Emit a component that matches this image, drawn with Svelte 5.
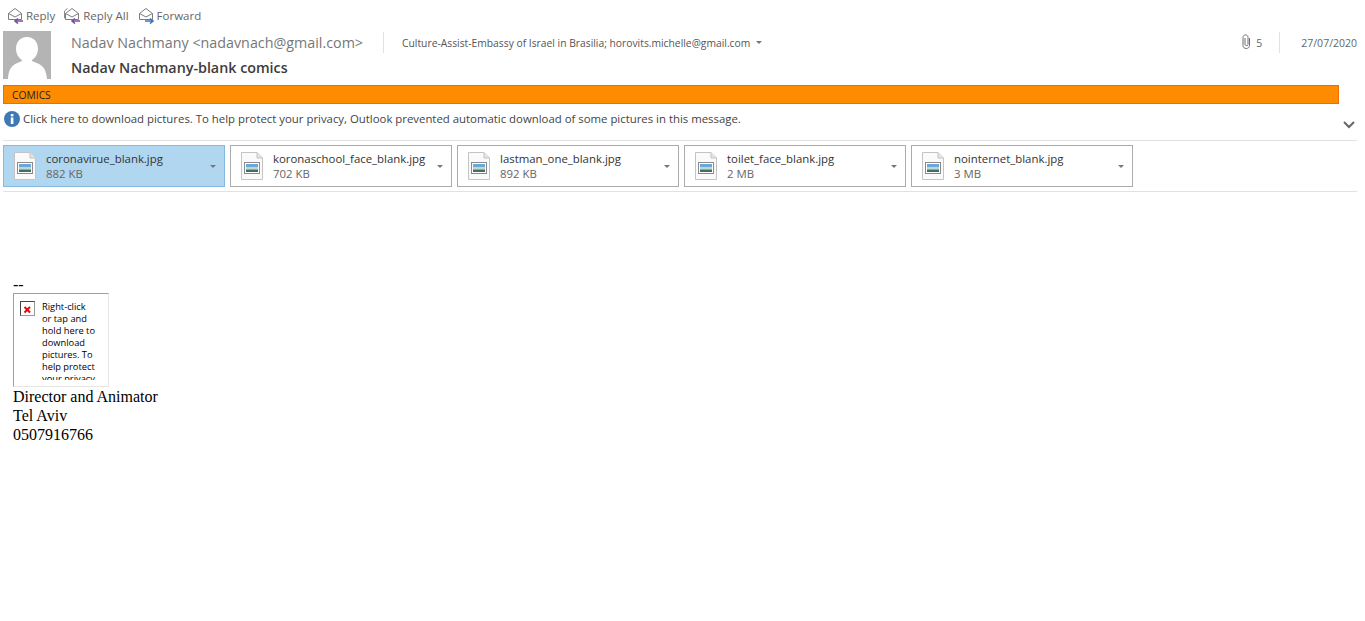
<script lang="ts">
	const attachments = [
		{ name: 'coronavirue_blank.jpg', size: '882 KB', selected: true },
		{ name: 'koronaschool_face_blank.jpg', size: '702 KB', selected: false },
		{ name: 'lastman_one_blank.jpg', size: '892 KB', selected: false },
		{ name: 'toilet_face_blank.jpg', size: '2 MB', selected: false },
		{ name: 'nointernet_blank.jpg', size: '3 MB', selected: false }
	];

	const actions = [
		{ label: 'Reply', arrow: '#7a4fa3', back: false, flip: true },
		{ label: 'Reply All', arrow: '#7a4fa3', back: true, flip: true },
		{ label: 'Forward', arrow: '#3f78b5', back: false, flip: false }
	];

	const blockedLines = [
		'Right-click',
		'or tap and',
		'hold here to',
		'download',
		'pictures. To',
		'help protect',
		'your privacy,'
	];
</script>

<div class="reading-pane">
	<div class="toolbar">
		{#each actions as action}
			<div class="action">
				<svg width="17" height="17" viewBox="0 0 17 17" fill="none">
					{#if action.back}
						<path d="M3.5 1.5 L0.5 4 V11 H2" stroke="#8a8a8a" />
					{/if}
					<path d="M1.5 6.5 L8 1.5 L14.5 6.5 V12.5 H1.5 Z" stroke="#7c7c7c" fill="#fff" />
					<path d="M1.5 6.5 L8 10 L14.5 6.5" stroke="#7c7c7c" />
					{#if action.flip}
						<path d="M16 14 H8 M11 11.5 L8 14 L11 16.5" stroke={action.arrow} stroke-width="1.6" />
					{:else}
						<path d="M7 14 H15 M12 11.5 L15 14 L12 16.5" stroke={action.arrow} stroke-width="1.6" />
					{/if}
				</svg>
				<span>{action.label}</span>
			</div>
		{/each}
	</div>

	<div class="header">
		<div class="avatar">
			<svg width="48" height="48" viewBox="0 0 48 48">
				<rect width="48" height="48" fill="#b4b4b4" />
				<path d="M24 6 C17 6 13 11 13 18 C13 23 16 27 19 29 V30 C13 33 6 33 5 48 H44 C43 33 35 33 29 30 V29 C32 27 35 23 35 18 C35 11 31 6 24 6 Z" fill="#fff" />
			</svg>
		</div>
		<div class="meta">
			<div class="meta-top">
				<span class="sender">Nadav Nachmany &lt;nadavnach@gmail.com&gt;</span>
				<span class="divider"></span>
				<span class="recipients">Culture-Assist-Embassy of Israel in Brasilia; horovits.michelle@gmail.com</span>
				<span class="caret small"></span>
				<span class="spacer"></span>
				<svg class="clip" width="9" height="16" viewBox="0 0 9 16" fill="none">
					<path d="M7.5 4 V11.5 C7.5 15.5 1 15.5 1 11.5 V3.5 C1 0 6 0 6 3.5 V10.5 C6 12 3 12 3 10.5 V4" stroke="#6f6f6f" />
				</svg>
				<span class="count">5</span>
				<span class="divider right"></span>
				<span class="date">27/07/2020</span>
			</div>
			<div class="subject">Nadav Nachmany-blank comics</div>
		</div>
	</div>

	<div class="category">COMICS</div>

	<div class="infobar">
		<svg width="16" height="16" viewBox="0 0 16 16">
			<circle cx="8" cy="8" r="8" fill="#3f78b5" />
			<rect x="6.8" y="6.5" width="2.6" height="6.5" fill="#fff" />
			<rect x="6.8" y="3" width="2.6" height="2.4" fill="#fff" />
		</svg>
		<span class="info-text">Click here to download pictures. To help protect your privacy, Outlook prevented automatic download of some pictures in this message.</span>
		<svg class="chevron" width="12" height="8" viewBox="0 0 12 8" fill="none">
			<path d="M1 1 L6 6 L11 1" stroke="#666" stroke-width="2" />
		</svg>
	</div>

	<div class="attachments">
		{#each attachments as file}
			<div class="attachment" class:selected={file.selected}>
				<svg class="file-icon" width="22" height="28" viewBox="0 0 22 28">
					<path d="M0.5 0.5 H16 L21.5 6 V27.5 H0.5 Z" fill="#fafafa" stroke="#c4c4c4" />
					<path d="M16 0.5 V6 H21.5" fill="#e4e4e4" stroke="#c4c4c4" />
					<rect x="3.5" y="10.5" width="15" height="11" fill="#fff" stroke="#8a8a8a" />
					<rect x="5" y="12" width="12" height="3.5" fill="#6aa8dc" />
					<rect x="5" y="15.5" width="12" height="2" fill="#c3d8c8" />
					<rect x="5" y="17.5" width="12" height="2.5" fill="#3d6f6a" />
				</svg>
				<div class="file-text">
					<div class="file-name">{file.name}</div>
					<div class="file-size">{file.size}</div>
				</div>
				<span class="caret"></span>
			</div>
		{/each}
	</div>

	<div class="body">
		<div class="dashes">--</div>
		<div class="blocked">
			<div class="broken-icon">
				<svg width="13" height="13" viewBox="0 0 13 13" fill="none">
					<path d="M3.5 3 L9 8.5 M9 3 L3.5 8.5" stroke="#f00000" stroke-width="2" />
				</svg>
			</div>
			<div class="blocked-text">
				{#each blockedLines as line}
					<div>{line}</div>
				{/each}
			</div>
		</div>
		<div>Director and Animator</div>
		<div>Tel Aviv</div>
		<div>0507916766</div>
	</div>
</div>

<style>
	:global(body) {
		background: #fff;
	}
	.reading-pane {
		height: 621px;
		overflow: hidden;
		box-sizing: border-box;
		padding-left: 3px;
		padding-right: 8px;
		font-family: "Open Sans", "Noto Sans", sans-serif;
		color: #444;
	}
	.toolbar {
		display: flex;
		gap: 9px;
		height: 31px;
		padding: 7px 0 0 4px;
		box-sizing: border-box;
	}
	.action {
		display: flex;
		align-items: flex-start;
		gap: 2px;
		font-size: 11.5px;
		line-height: 17px;
		color: #666;
	}
	.header {
		display: flex;
		gap: 20px;
		height: 54px;
	}
	.avatar {
		width: 48px;
		height: 48px;
	}
	.meta {
		flex: 1;
		min-width: 0;
	}
	.meta-top {
		display: flex;
		align-items: center;
		height: 22px;
	}
	.sender {
		font-size: 14.3px;
		color: #777;
		white-space: nowrap;
	}
	.divider {
		width: 1px;
		height: 21px;
		background: #e1e1e1;
		margin: 0 18px 0 20px;
	}
	.divider.right {
		margin: 0 21px 0 17px;
	}
	.recipients {
		margin-top: 1px;
		font-size: 10.3px;
		color: #555;
		white-space: nowrap;
	}
	.spacer {
		flex: 1;
	}
	.clip {
		margin-right: 5px;
	}
	.count,
	.date {
		margin-top: 1px;
		font-size: 10.5px;
		color: #666;
	}
	.subject {
		margin-top: 5px;
		font-size: 14.3px;
		line-height: 19px;
		font-weight: 600;
		color: #3c3c3c;
	}
	.caret {
		width: 0;
		height: 0;
		margin-left: auto;
		border-left: 3px solid transparent;
		border-right: 3px solid transparent;
		border-top: 3px solid #777;
	}
	.caret.small {
		margin-left: 6px;
	}
	.category {
		box-sizing: border-box;
		width: 1336px;
		height: 19px;
		padding-left: 8px;
		background: #ff8c00;
		border: 1px solid #f06a14;
		font-size: 10.3px;
		line-height: 18px;
		color: #222;
	}
	.infobar {
		display: flex;
		align-items: center;
		gap: 3px;
		height: 29px;
		padding-left: 1px;
		padding-bottom: 7px;
		border-bottom: 1px solid #e1e1e1;
		position: relative;
	}
	.info-text {
		font-size: 11.39px;
		color: #444;
		white-space: nowrap;
	}
	.chevron {
		position: absolute;
		right: 2px;
		top: 17px;
	}
	.attachments {
		display: flex;
		gap: 5px;
		padding: 4px 0;
		border-bottom: 1px solid #e1e1e1;
	}
	.attachment {
		box-sizing: border-box;
		width: 222px;
		height: 42px;
		display: flex;
		align-items: center;
		gap: 10px;
		padding: 0 8px 0 10px;
		border: 1px solid #ababab;
		background: #fff;
	}
	.attachment.selected {
		background: #b1d6f0;
		border-color: #84b9e1;
	}
	.file-icon {
		flex: none;
	}
	.file-text {
		flex: 1;
		min-width: 0;
		font-size: 11.4px;
		line-height: 15px;
	}
	.file-name {
		color: #333;
		white-space: nowrap;
	}
	.file-size {
		color: #666;
	}
	.body {
		padding: 84px 0 0 10px;
		font-family: "Liberation Serif", serif;
		font-size: 16px;
		line-height: 19px;
		color: #000;
	}
	.dashes {
		line-height: 17px;
	}
	.blocked {
		box-sizing: border-box;
		width: 96px;
		height: 94px;
		display: flex;
		gap: 7px;
		padding: 7px 0 0 6px;
		overflow: hidden;
		border: 1px solid #e6e6e6;
		border-top-color: #a0a0a0;
		border-left-color: #a0a0a0;
		font-family: "Open Sans", sans-serif;
	}
	.broken-icon {
		flex: none;
		width: 13px;
		height: 13px;
		border: 1px solid #444;
		border-right-color: #999;
		border-bottom-color: #999;
	}
	.blocked-text {
		width: 54px;
		height: 79px;
		overflow: hidden;
		white-space: nowrap;
		font-size: 9.3px;
		line-height: 12px;
		color: #000;
	}
</style>
